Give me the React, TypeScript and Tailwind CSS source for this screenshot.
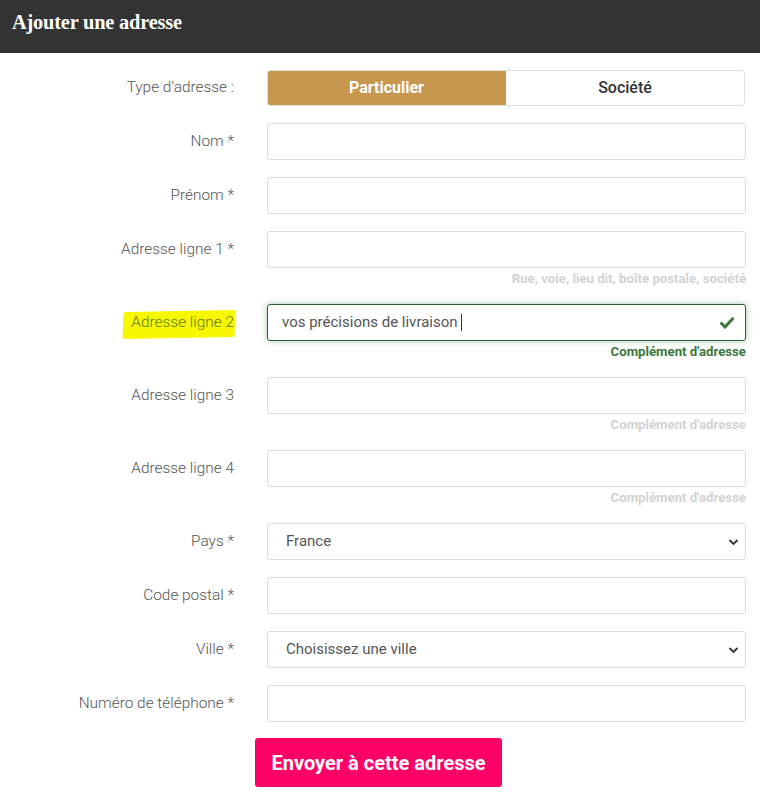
import React from "react";

const Chevron = () => (
  <svg width="11" height="8" viewBox="0 0 11 8" className="absolute right-[7px] top-1/2 -translate-y-1/2">
    <path d="M1.5 2 L5.5 6 L9.5 2" fill="none" stroke="#333" strokeWidth="1.8" />
  </svg>
);

const Check = () => (
  <svg width="14" height="12" viewBox="0 0 14 12" className="absolute right-[12px] top-1/2 -translate-y-1/2">
    <path d="M1.5 6.5 L5 10 L12.5 2" fill="none" stroke="#3c763d" strokeWidth="3" strokeLinecap="square" />
  </svg>
);

function Row({
  label,
  children,
  help,
  helpClass,
  highlight,
}: {
  label: string;
  children: React.ReactNode;
  help?: string;
  helpClass?: string;
  highlight?: boolean;
}) {
  return (
    <div className="flex mb-[17px]">
      <div className="w-[234px] h-[37px] flex items-center justify-end shrink-0">
        {highlight ? (
          <span className="relative inline-block">
            <span className="absolute left-[-8px] right-[-1px] top-[1px] bottom-[-4px] bg-[#f6f700] -skew-x-3 rotate-[-1deg] rounded-[2px]" />
            <span className="relative text-[15.4px] font-light text-[#5f7a1c]">{label}</span>
          </span>
        ) : (
          <span className="text-[15.4px] font-light text-[#555]">{label}</span>
        )}
      </div>
      <div className="ml-[33px] w-[479px]">
        {children}
        {help && (
          <div className={`text-right text-[13.2px] font-bold leading-[17px] mt-[2px] ${helpClass ?? "text-[#d2d2d2]"}`}>
            {help}
          </div>
        )}
      </div>
    </div>
  );
}

const inputCls =
  "w-full h-[37px] border border-[#dcdcdc] rounded-[3px] px-[15px] text-[15px] text-[#555] bg-white outline-none";

export default function App() {
  return (
    <div className="w-[760px] min-h-[797px] bg-white" style={{ fontFamily: "Roboto, 'Liberation Sans', sans-serif" }}>
      <div className="h-[53px] bg-[#333333] flex items-center pl-[12px]">
        <h1
          className="text-white text-[20.4px] font-bold tracking-[-0.2px] mt-[-8px]"
          style={{ fontFamily: "'Liberation Serif', 'DejaVu Serif', serif" }}
        >
          Ajouter une adresse
        </h1>
      </div>

      <div className="pt-[17px]">
        <div className="flex mb-[17px]">
          <div className="w-[234px] h-[36px] flex items-center justify-end shrink-0">
            <span className="text-[15.4px] font-light text-[#555]">Type d'adresse :</span>
          </div>
          <div className="ml-[33px] w-[478px] h-[36px] flex border border-[#e0e0e0] rounded-[3px] overflow-hidden">
            <div className="w-[239px] -my-px -ml-px bg-[#c8974f] flex items-center justify-center text-white text-[16px] font-bold">
              Particulier
            </div>
            <div className="flex-1 flex items-center justify-center text-[#333] text-[16px] font-medium">Société</div>
          </div>
        </div>

        <Row label="Nom *">
          <input className={inputCls} readOnly />
        </Row>
        <Row label="Prénom *">
          <input className={inputCls} readOnly />
        </Row>
        <Row label="Adresse ligne 1 *" help="Rue, voie, lieu dit, boîte postale, société">
          <input className={inputCls} readOnly />
        </Row>
        <Row label="Adresse ligne 2" highlight help="Complément d'adresse" helpClass="text-[#3c763d]">
          <div className="relative">
            <div className="w-full h-[37px] border border-[#2f5e34] rounded-[3px] pl-[14px] text-[15px] text-[#555] bg-white flex items-center shadow-[0_0_6px_rgba(90,160,90,0.55)]">
              vos précisions de livraison
              <span className="inline-block w-px h-[17px] bg-[#333] ml-[3px]" />
            </div>
            <Check />
          </div>
        </Row>
        <Row label="Adresse ligne 3" help="Complément d'adresse">
          <input className={inputCls} readOnly />
        </Row>
        <Row label="Adresse ligne 4" help="Complément d'adresse">
          <input className={inputCls} readOnly />
        </Row>
        <Row label="Pays *">
          <div className="relative">
            <div className={`${inputCls} flex items-center pl-[18px]`}>France</div>
            <Chevron />
          </div>
        </Row>
        <Row label="Code postal *">
          <input className={inputCls} readOnly />
        </Row>
        <Row label="Ville *">
          <div className="relative">
            <div className={`${inputCls} flex items-center pl-[18px]`}>Choisissez une ville</div>
            <Chevron />
          </div>
        </Row>
        <Row label="Numéro de téléphone *">
          <input className={inputCls} readOnly />
        </Row>

        <div className="flex mt-[-1px] pl-[255px]">
          <button className="w-[247px] h-[49px] bg-[#ff0066] rounded-[3px] text-white text-[20px] font-bold">
            Envoyer à cette adresse
          </button>
        </div>
      </div>
    </div>
  );
}
